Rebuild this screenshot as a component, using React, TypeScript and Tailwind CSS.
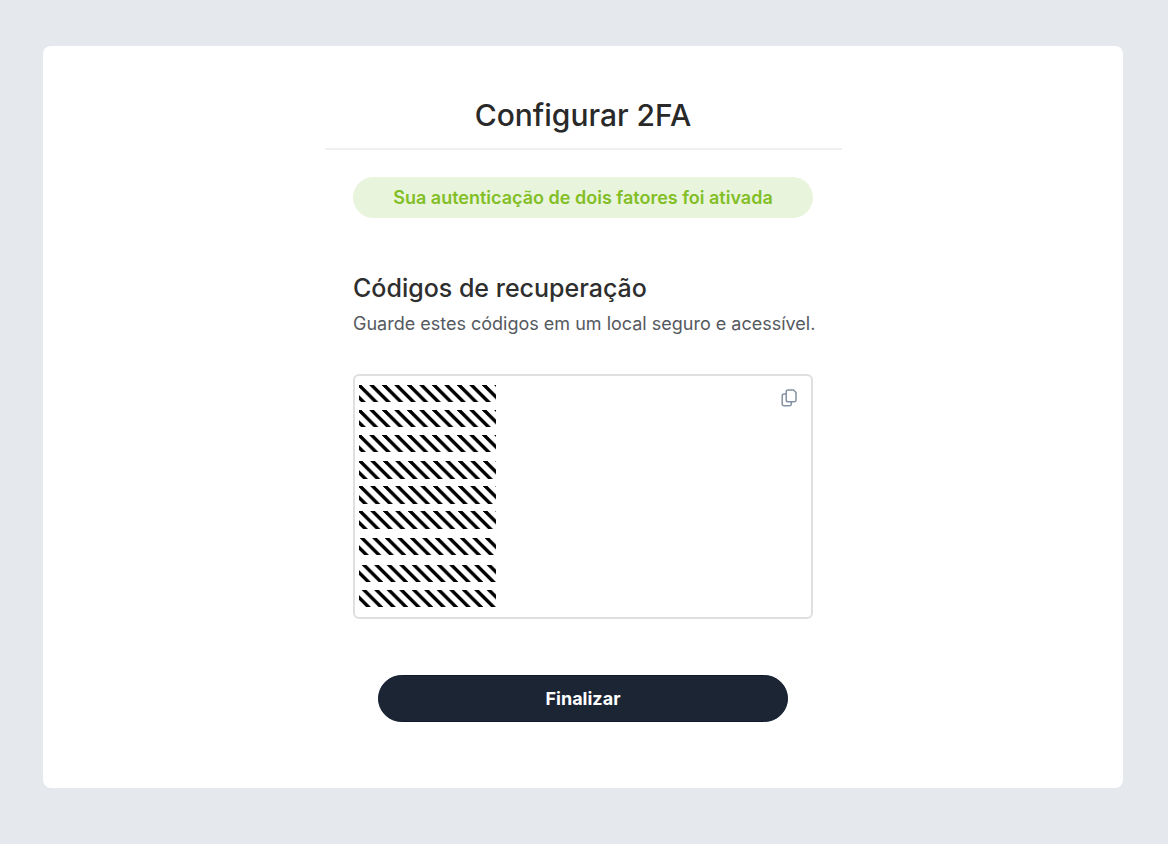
import { useState } from "react";

// top and height of every masked code, relative to the first one
const maskedCodes = [
  { y: 0, height: 17 },
  { y: 25, height: 17 },
  { y: 50, height: 17 },
  { y: 76, height: 18 },
  { y: 101, height: 18 },
  { y: 126, height: 18 },
  { y: 153, height: 17 },
  { y: 180, height: 17 },
  { y: 205, height: 17 },
];

const CopyIcon = () => (
  <svg viewBox="0 0 16 18" className="h-[18px] w-4" fill="none" stroke="#8491a2" strokeWidth="1.5" strokeLinejoin="round">
    <path d="M7 1h5.5L15 3.5V11a1.8 1.8 0 0 1-1.8 1.8H7A1.8 1.8 0 0 1 5.2 11V2.8A1.8 1.8 0 0 1 7 1Z" />
    <path d="M5.2 5H3A1.8 1.8 0 0 0 1.2 6.8V15A1.8 1.8 0 0 0 3 16.8H8.5A1.8 1.8 0 0 0 10.3 15V12.8" />
  </svg>
);

const MaskedCodes = () => (
  <svg width="137" height="222" aria-hidden="true" shapeRendering="crispEdges">
    <defs>
      <pattern id="stripes" width="12.5" height="12.5" patternUnits="userSpaceOnUse">
        <path d="M-12.5 -12.5L25 25M0 -12.5L25 12.5M-12.5 0L12.5 25" stroke="#000" strokeWidth="3.3" />
      </pattern>
    </defs>
    {maskedCodes.map((code) => (
      <rect key={code.y} y={code.y} width="137" height={code.height} fill="url(#stripes)" />
    ))}
  </svg>
);

const App = () => {
  const [copied, setCopied] = useState(false);

  return (
    <div className="min-h-screen bg-[#e5e8ed] pt-[46px] pr-[45px] pb-14 pl-[43px] font-['Inter',sans-serif]">
      <main className="flex flex-col items-center rounded-lg bg-white pt-12 pb-[66px]">
        {/* Title */}
        <div className="w-full max-w-[517px] border-b-2 border-[#f0f0f1] pb-3">
          <h1 className="text-center text-[30px] leading-[42px] font-medium text-[#292929]">
            Configurar 2FA
          </h1>
        </div>

        <div className="flex w-full max-w-[460px] flex-col">
          <p
            role="status"
            className="mt-[27px] rounded-full bg-[#e9f4dc] text-center text-lg leading-[41px] font-semibold text-[#82bf26]"
          >
            Sua autenticação de dois fatores foi ativada
          </p>

          <h2 className="mt-[54px] text-[25px] leading-8 font-medium text-[#2e2e2e]">
            Códigos de recuperação
          </h2>
          <p className="mt-1.5 text-lg leading-7 text-[#555960] sm:whitespace-nowrap">
            Guarde estes códigos em um local seguro e acessível.
          </p>

          {/* Recovery codes */}
          <div className="mt-9 flex items-start justify-between rounded-md border-2 border-[#dedfe0] pt-[9px] pr-3.5 pb-[10px] pl-1">
            <MaskedCodes />
            <button
              type="button"
              aria-label={copied ? "Copiado" : "Copiar códigos"}
              onClick={() => setCopied(true)}
              className="mt-1 cursor-pointer"
            >
              <CopyIcon />
            </button>
          </div>

          <button
            type="button"
            className="mx-[25px] mt-14 h-[47px] cursor-pointer rounded-full border border-[#101a2c] bg-[#1c2534] text-lg font-bold text-white"
          >
            Finalizar
          </button>
        </div>
      </main>
    </div>
  );
};

export default App;
